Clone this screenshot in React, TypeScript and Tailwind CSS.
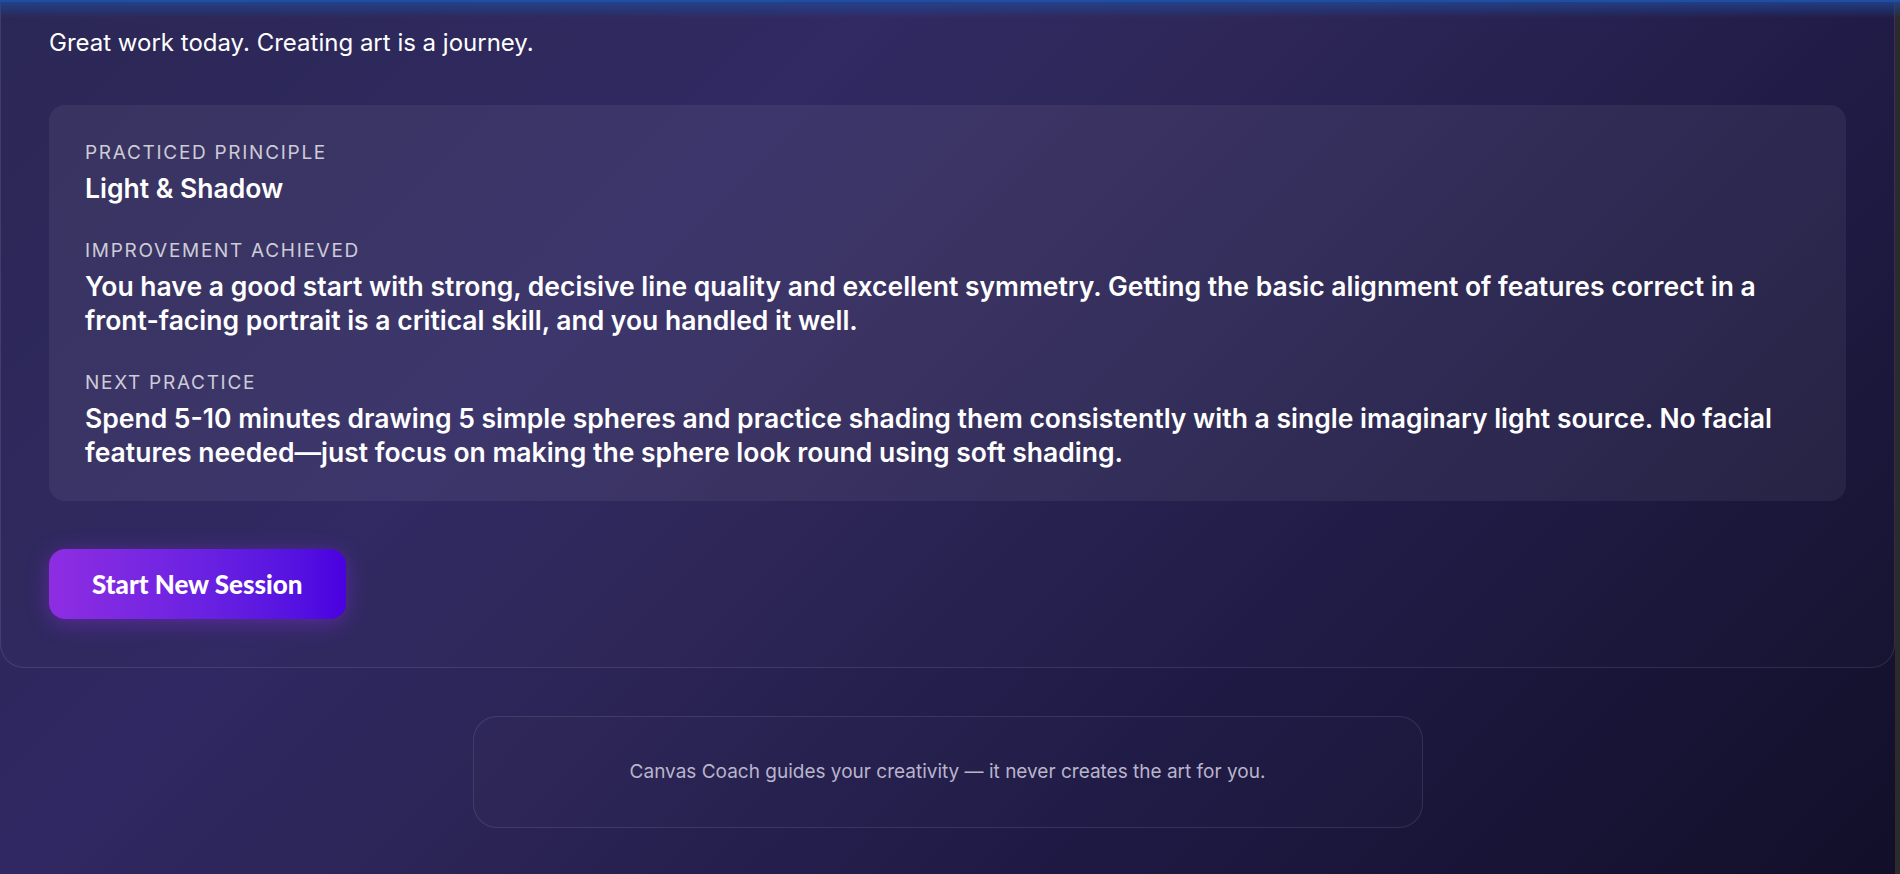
import React from 'react';

const sections = [
  {
    label: 'Practiced Principle',
    text: 'Light & Shadow',
  },
  {
    label: 'Improvement Achieved',
    text: 'You have a good start with strong, decisive line quality and excellent symmetry. Getting the basic alignment of features correct in a front-facing portrait is a critical skill, and you handled it well.',
  },
  {
    label: 'Next Practice',
    text: 'Spend 5-10 minutes drawing 5 simple spheres and practice shading them consistently with a single imaginary light source. No facial features needed—just focus on making the sphere look round using soft shading.',
  },
];

export default function App() {
  return (
    <div className="relative flex min-h-screen w-full bg-[linear-gradient(135deg,#292553_0%,#2f2862_32%,#2c2557_45%,#1f1a45_68%,#120f29_100%)] font-['Inter','Noto_Sans',sans-serif] text-white">
      <div className="pointer-events-none absolute inset-x-0 top-0 h-[18px] bg-gradient-to-b from-[#1f4b9c]/80 to-transparent" />
      <div className="pointer-events-none absolute inset-x-0 top-0 h-[2px] bg-[#1d4fa3]" />

      <main className="flex-1">
        <section className="rounded-b-3xl border border-t-0 border-white/10 bg-white/[0.01] px-12 pb-12 pt-[27px]">
          <p className="text-2xl leading-8 text-white">Great work today. Creating art is a journey.</p>

          <div className="mt-[46px] rounded-2xl bg-white/[0.06] px-9 pb-8 pt-[34px]">
            {sections.map((s, i) => (
              <div key={s.label} className={i > 0 ? 'mt-8' : ''}>
                <div className="text-[19px] uppercase leading-7 tracking-[0.09em] text-white/75">{s.label}</div>
                <div className="mt-1 text-[26.5px] font-semibold leading-[34px]">{s.text}</div>
              </div>
            ))}
          </div>

          <button className="mt-12 h-[70px] rounded-2xl bg-gradient-to-r from-[#8e2de2] to-[#4a00e0] px-[43px] font-['Lato',sans-serif] text-[26px] font-black text-white shadow-[0_4px_22px_rgba(142,45,226,0.45)]">
            Start New Session
          </button>
        </section>

        <footer className="mx-auto mt-12 flex h-[112px] w-[950px] items-center justify-center rounded-3xl border border-white/10 bg-white/[0.01]">
          <p className="text-[19px] text-[#b9b5cc]">Canvas Coach guides your creativity — it never creates the art for you.</p>
        </footer>
      </main>

      <div className="w-[5px] shrink-0 bg-[#2b2b2e]" />
    </div>
  );
}
